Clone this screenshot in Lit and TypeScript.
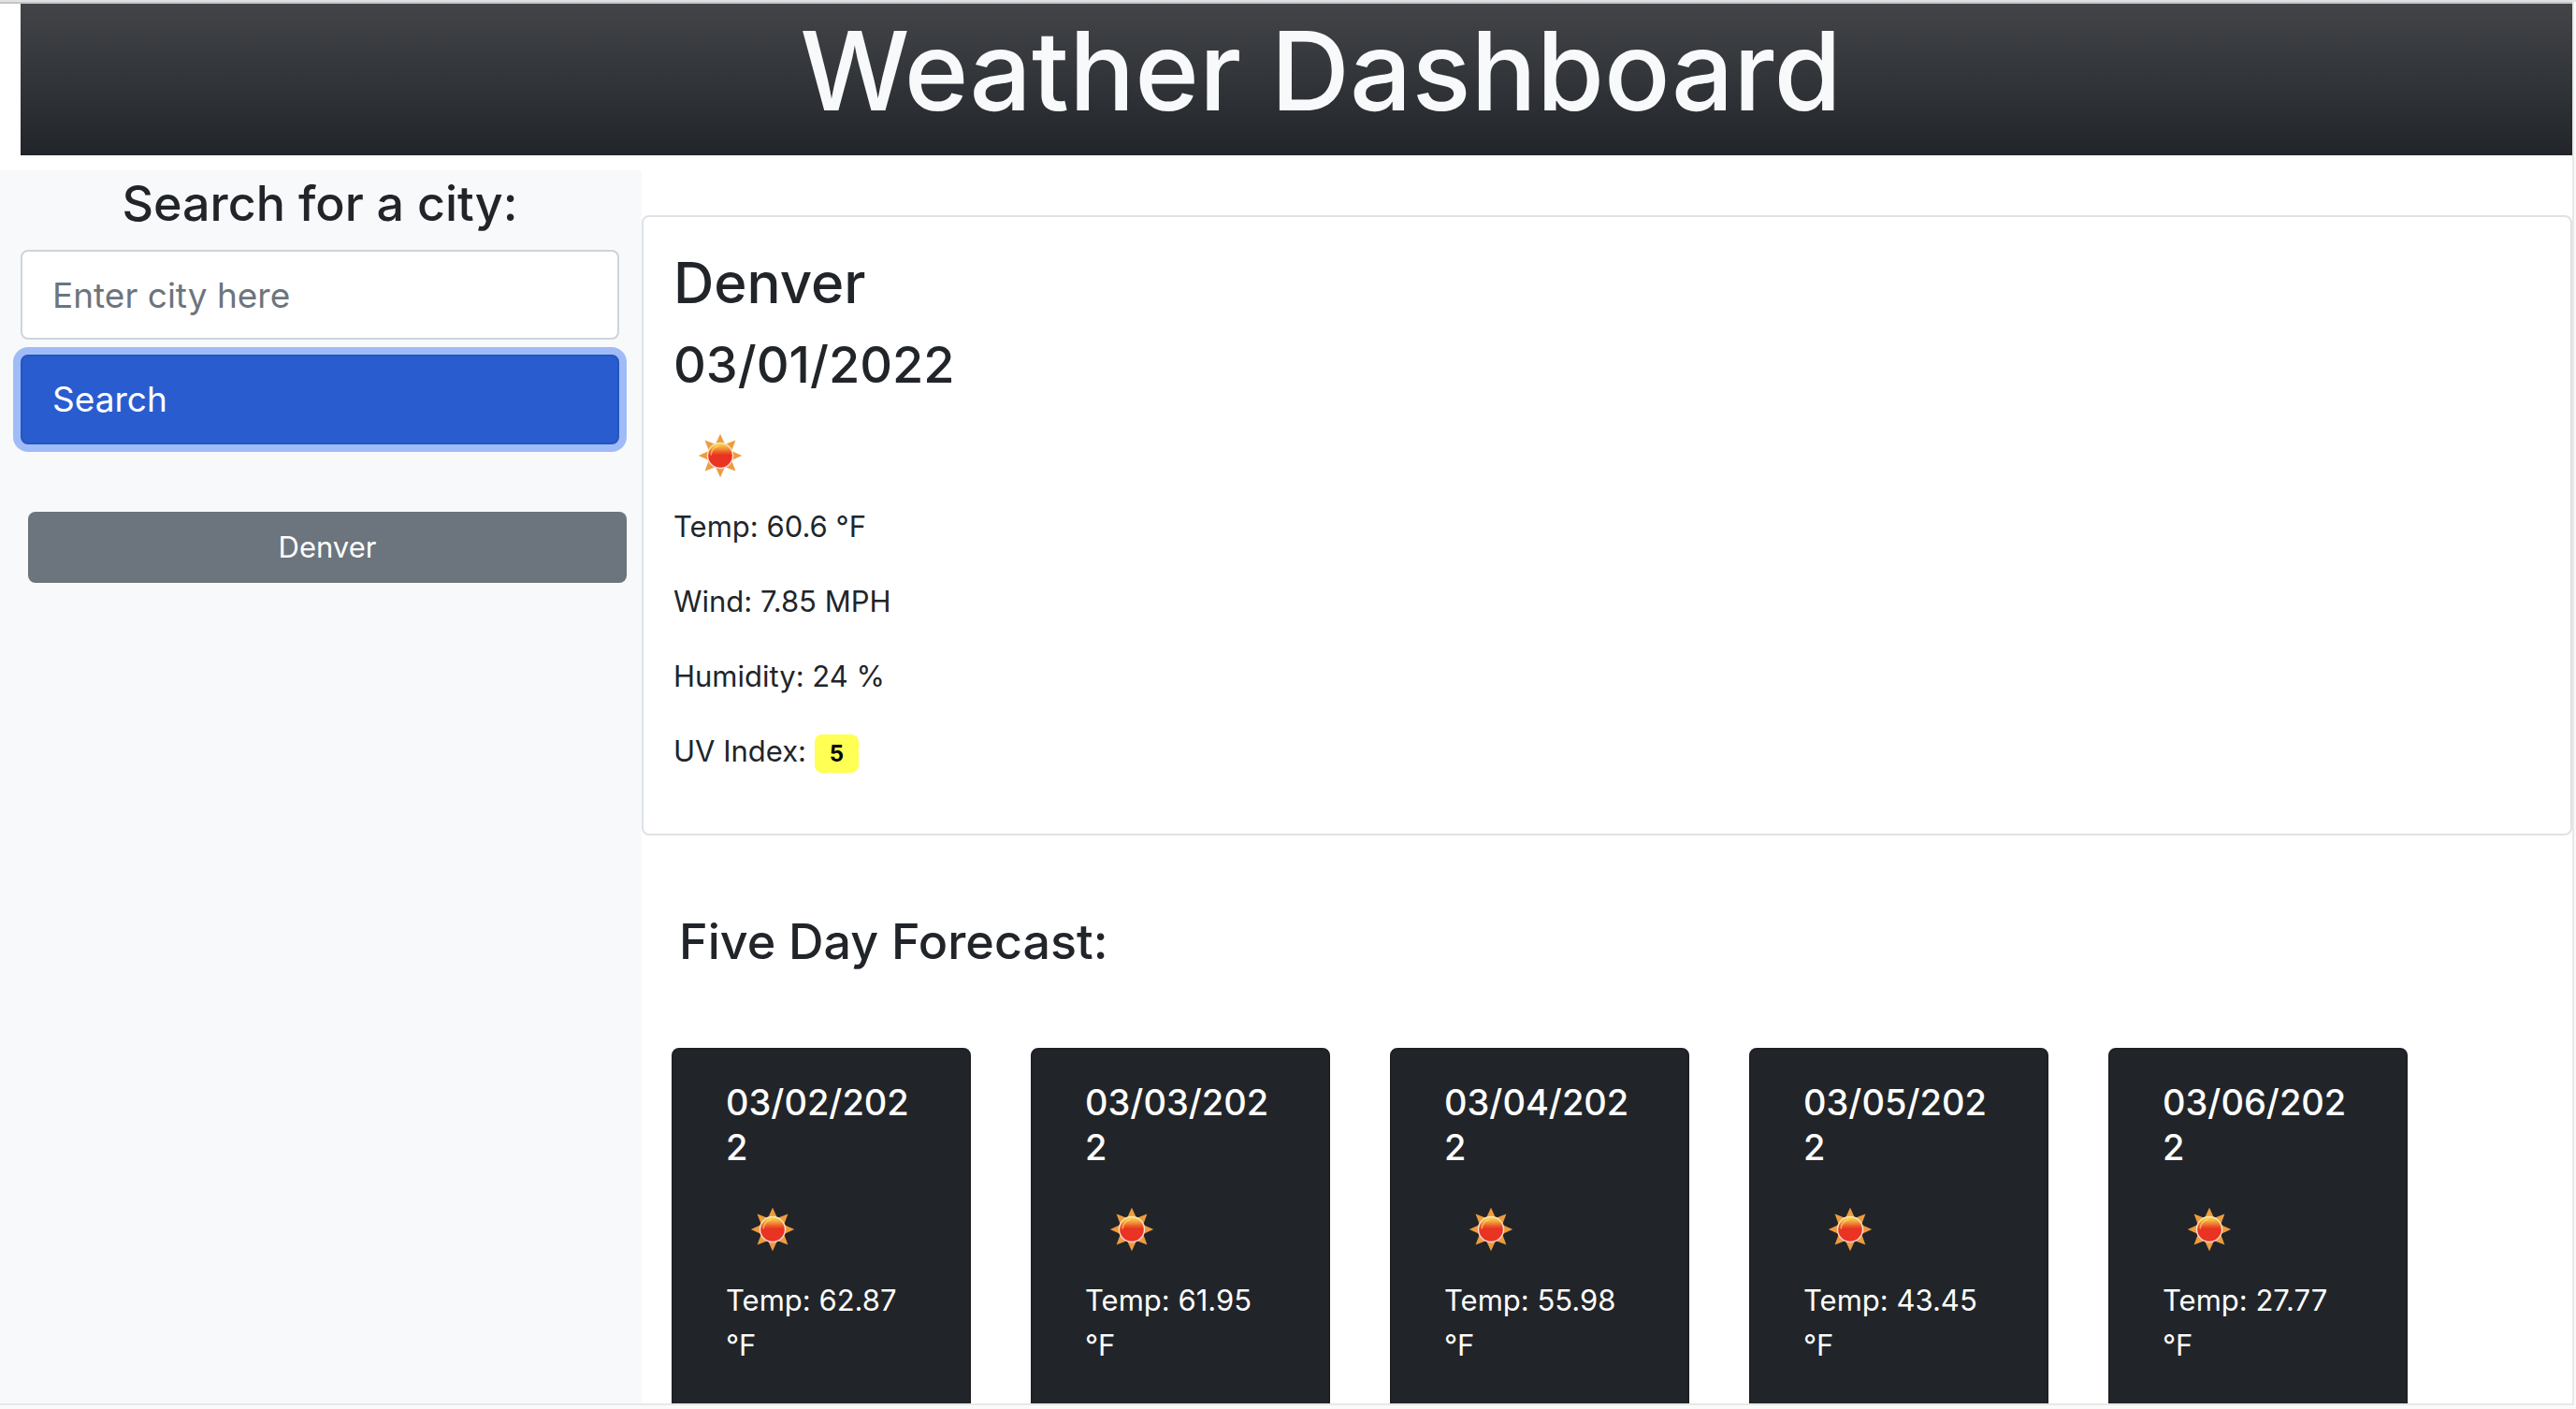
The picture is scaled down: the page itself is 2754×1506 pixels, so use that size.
import { LitElement, html, css, svg } from "lit";
import { customElement, property, state } from "lit/decorators.js";

interface Day {
  date: string;
  temp: string;
}

const FORECAST: Day[] = [
  { date: "03/02/2022", temp: "62.87" },
  { date: "03/03/2022", temp: "61.95" },
  { date: "03/04/2022", temp: "55.98" },
  { date: "03/05/2022", temp: "43.45" },
  { date: "03/06/2022", temp: "27.77" },
];

const RAYS = [0, 45, 90, 135, 180, 225, 270, 315];

@customElement("sun-icon")
export class SunIcon extends LitElement {
  static styles = css`
    :host {
      display: block;
      width: 48px;
      height: 48px;
    }
    .sun {
      display: block;
      width: 100%;
      height: 100%;
    }
  `;

  render() {
    return html`
      <svg class="sun" viewBox="0 0 48 48" role="img" aria-label="Clear sky">
        <defs>
          <linearGradient id="disc" x1="0" y1="0" x2="0" y2="1">
            <stop offset="0" stop-color="#f9d65c" />
            <stop offset="0.18" stop-color="#f3a03c" />
            <stop offset="0.36" stop-color="#ec5a28" />
            <stop offset="0.48" stop-color="#e93323" />
            <stop offset="1" stop-color="#ea3323" />
          </linearGradient>
          <linearGradient id="rim" x1="0" y1="0" x2="0" y2="1">
            <stop offset="0" stop-color="#fbe7a4" />
            <stop offset="0.5" stop-color="#fbe3d0" />
            <stop offset="1" stop-color="#f7d0d4" />
          </linearGradient>
        </defs>
        ${RAYS.map(
          (a) => svg`<path d="M24 0.8 L30 14 H18 Z" fill="#ee9c3e" transform="rotate(${a} 24 24)" />`
        )}
        <circle cx="24" cy="24" r="14.2" fill="url(#rim)" />
        <circle cx="24" cy="24" r="12.8" fill="url(#disc)" />
        <path
          d="M14.2 23 A10 10 0 0 1 22 13.6"
          fill="none"
          stroke="#fbe36a"
          stroke-width="1.6"
          stroke-linecap="round"
          opacity="0.6"
        />
      </svg>
    `;
  }
}

@customElement("forecast-card")
export class ForecastCard extends LitElement {
  @property() date = "";
  @property() temp = "";

  static styles = css`
    :host {
      display: block;
    }
    .card {
      box-sizing: border-box;
      height: 100%;
      padding: 32px 56px 64px;
      border: 2px solid #1e2024;
      border-radius: 8px;
      background: #212529;
      color: #fff;
    }
    .date {
      margin: 0;
      font-size: 38px;
      line-height: 48px;
      font-weight: 500;
      overflow-wrap: anywhere;
    }
    .icon {
      margin: 40px 26px 28px;
    }
    .reading {
      margin: 0;
      font-size: 31px;
      line-height: 48px;
    }
  `;

  render() {
    return html`
      <article class="card">
        <h5 class="date">${this.date}</h5>
        <sun-icon class="icon"></sun-icon>
        <p class="reading">Temp: ${this.temp} °F</p>
      </article>
    `;
  }
}

@customElement("app-root")
export class AppRoot extends LitElement {
  @state() private city = "Denver";
  @state() private history = ["Denver"];

  static styles = css`
    :host {
      display: flex;
      flex-direction: column;
      box-sizing: border-box;
      height: 100vh;
      overflow: hidden;
      border-top: 2px solid #e2e2e2;
      background: #fafafa;
      color: #212529;
      font-family: Inter, "Liberation Sans", sans-serif;
      font-size: 31px;
      line-height: 48px;
    }
    .page {
      flex: 1;
      min-height: 0;
      display: flex;
      flex-direction: column;
      margin: 0 2px 4px 0;
      border: solid #e8e8e8;
      border-width: 0 2px 2px 0;
      overflow: hidden;
      background: #fff;
    }
    .top {
      border-top: 2px solid #c4c4c6;
      padding-left: 22px;
    }
    .banner {
      padding: 0 0 18px 52px;
      background: linear-gradient(#424448, #212529);
      text-align: center;
    }
    .title {
      margin: 0;
      color: #f8f9fa;
      font-size: 117px;
      line-height: 144px;
      font-weight: 500;
    }
    .body {
      flex: 1;
      min-height: 0;
      display: grid;
      grid-template-columns: 1fr 3fr;
      margin: 16px 0 0 -2px;
    }
    .side {
      box-sizing: border-box;
      padding: 0 24px;
      background: #f8f9fb;
    }
    .search {
      display: flex;
      flex-direction: column;
    }
    .search-label {
      margin-top: 2px;
      font-size: 52px;
      line-height: 67px;
      font-weight: 500;
      text-align: center;
    }
    .field,
    .submit {
      box-sizing: border-box;
      width: 100%;
      height: 96px;
      margin-top: 16px;
      padding: 0 32px;
      border: 2px solid #ced4da;
      border-radius: 8px;
      font: inherit;
      font-size: 37px;
      text-align: left;
    }
    .field {
      background: #fff;
      color: #212529;
    }
    .field::placeholder {
      color: #6c757d;
      opacity: 1;
    }
    .submit {
      border-color: #2655bf;
      background: #295ccf;
      color: #fff;
      box-shadow: 0 0 0 8px #a0bcf8;
    }
    .history {
      display: flex;
      flex-direction: column;
      gap: 16px;
      margin: 72px 0 0;
      padding: 0 0 0 8px;
      list-style: none;
    }
    .item {
      margin-right: -8px;
    }
    .past {
      width: 100%;
      height: 76px;
      border: 0;
      border-radius: 8px;
      background: #6c757d;
      color: #fff;
      font: inherit;
    }
    .main {
      display: flex;
      flex-direction: column;
      min-width: 0;
      min-height: 0;
      padding-top: 48px;
    }
    .current {
      padding: 32px;
      border: 2px solid #dee2e6;
      border-radius: 8px;
    }
    .city {
      margin: 0 0 16px;
      font-size: 60px;
      line-height: 76px;
      font-weight: 500;
    }
    .today {
      margin: 0;
      font-size: 54px;
      line-height: 67px;
      font-weight: 500;
    }
    .icon {
      margin: 40px 26px 28px;
    }
    .reading {
      margin: 0 0 32px;
    }
    .uv {
      display: inline-block;
      padding: 8px 16px;
      border-radius: 8px;
      background: #ffff54;
      color: #000;
      font-size: 24px;
      line-height: 25px;
      font-weight: 700;
    }
    .heading {
      margin: 80px 40px;
      font-size: 52px;
      line-height: 67px;
      font-weight: 500;
    }
    .days {
      display: grid;
      grid-template-columns: repeat(5, 320px);
      gap: 64px;
      padding-left: 32px;
    }
  `;

  private onSubmit(e: Event) {
    e.preventDefault();
    const form = e.target as HTMLFormElement;
    const name = String(new FormData(form).get("city") ?? "").trim();
    if (!name) return;
    this.city = name;
    if (!this.history.includes(name)) this.history = [...this.history, name];
    form.reset();
  }

  render() {
    return html`
      <div class="page">
        <header class="top">
          <div class="banner"><h1 class="title">Weather Dashboard</h1></div>
        </header>
        <div class="body">
          <aside class="side">
            <form class="search" @submit=${this.onSubmit}>
              <label class="search-label" for="city">Search for a city:</label>
              <input class="field" id="city" name="city" type="text" placeholder="Enter city here" />
              <button class="submit" type="submit">Search</button>
            </form>
            <ul class="history">
              ${this.history.map(
                (c) => html`<li class="item">
                  <button class="past" type="button" @click=${() => (this.city = c)}>${c}</button>
                </li>`
              )}
            </ul>
          </aside>
          <main class="main">
            <section class="current">
              <h2 class="city">${this.city}</h2>
              <h3 class="today">03/01/2022</h3>
              <sun-icon class="icon"></sun-icon>
              <p class="reading">Temp: 60.6 °F</p>
              <p class="reading">Wind: 7.85 MPH</p>
              <p class="reading">Humidity: 24 %</p>
              <p class="reading">UV Index: <span class="uv">5</span></p>
            </section>
            <h3 class="heading">Five Day Forecast:</h3>
            <section class="days">
              ${FORECAST.map((d) => html`<forecast-card .date=${d.date} .temp=${d.temp}></forecast-card>`)}
            </section>
          </main>
        </div>
      </div>
    `;
  }
}
